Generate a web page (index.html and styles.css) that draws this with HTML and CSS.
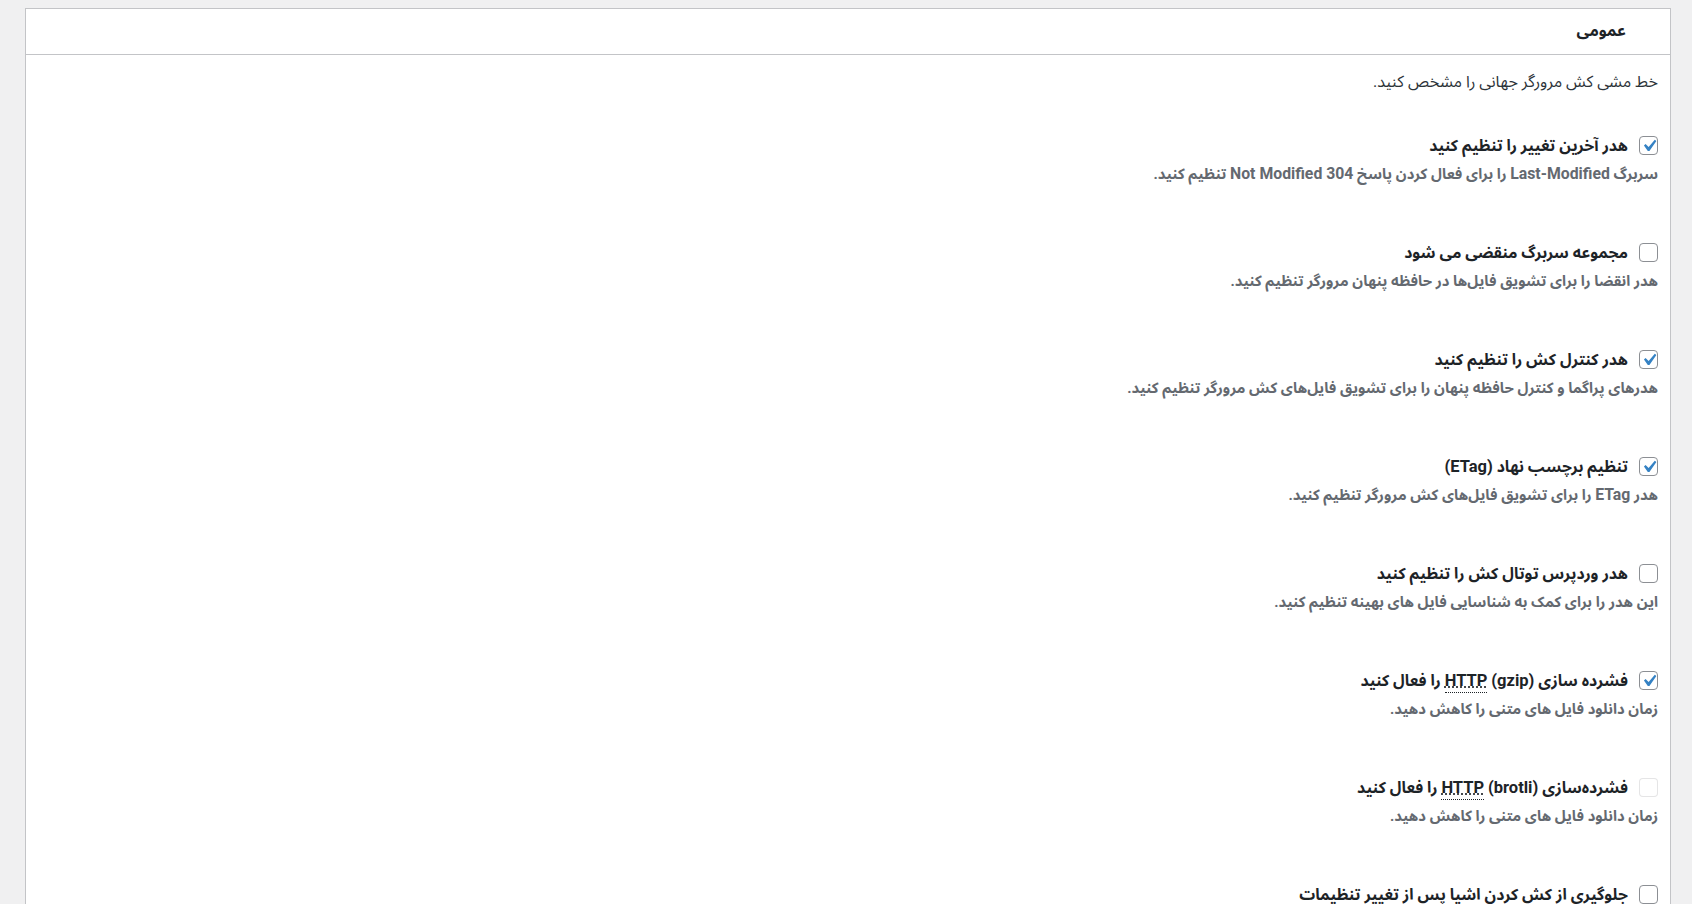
FILE: index.html
```html
<!DOCTYPE html>
<html lang="fa" dir="rtl">
<head>
<meta charset="utf-8">
<title>عمومی</title>
<link rel="stylesheet" href="styles.css">
</head>
<body>
<div class="page">
  <div class="card">
    <div class="card-head"><h2 class="card-title">عمومی</h2></div>
    <div class="card-body">
      <p class="intro">خط مشی کش مرورگر جهانی را مشخص کنید.</p>
      <ul class="opts">
        <li class="opt">
          <label class="opt-title"><span class="cb"><svg class="tick" viewBox="0 0 20 20"><path d="M14.83 4.89l1.34.94-5.81 8.38H9.02L5.78 9.67l1.34-1.25 2.57 2.4z"/></svg></span><span>هدر آخرین تغییر را تنظیم کنید</span></label>
          <p class="opt-desc">سربرگ <span class="lat">Last-Modified</span> را برای فعال کردن پاسخ <span class="lat">304 Not Modified</span> تنظیم کنید.</p>
        </li>
        <li class="opt">
          <label class="opt-title"><span class="cb"></span><span>مجموعه سربرگ منقضی می شود</span></label>
          <p class="opt-desc">هدر انقضا را برای تشویق فایل‌ها در حافظه پنهان مرورگر تنظیم کنید.</p>
        </li>
        <li class="opt">
          <label class="opt-title"><span class="cb"><svg class="tick" viewBox="0 0 20 20"><path d="M14.83 4.89l1.34.94-5.81 8.38H9.02L5.78 9.67l1.34-1.25 2.57 2.4z"/></svg></span><span>هدر کنترل کش را تنظیم کنید</span></label>
          <p class="opt-desc">هدرهای پراگما و کنترل حافظه پنهان را برای تشویق فایل‌های کش مرورگر تنظیم کنید.</p>
        </li>
        <li class="opt">
          <label class="opt-title"><span class="cb"><svg class="tick" viewBox="0 0 20 20"><path d="M14.83 4.89l1.34.94-5.81 8.38H9.02L5.78 9.67l1.34-1.25 2.57 2.4z"/></svg></span><span>تنظیم برچسب نهاد <span class="lat">(ETag)</span></span></label>
          <p class="opt-desc">هدر <span class="lat">ETag</span> را برای تشویق فایل‌های کش مرورگر تنظیم کنید.</p>
        </li>
        <li class="opt">
          <label class="opt-title"><span class="cb"></span><span>هدر وردپرس توتال کش را تنظیم کنید</span></label>
          <p class="opt-desc">این هدر را برای کمک به شناسایی فایل های بهینه تنظیم کنید.</p>
        </li>
        <li class="opt">
          <label class="opt-title"><span class="cb"><svg class="tick" viewBox="0 0 20 20"><path d="M14.83 4.89l1.34.94-5.81 8.38H9.02L5.78 9.67l1.34-1.25 2.57 2.4z"/></svg></span><span>فشرده سازی <abbr class="lat" title="Hypertext Transfer Protocol">HTTP</abbr> <span class="lat">(gzip)</span> را فعال کنید</span></label>
          <p class="opt-desc">زمان دانلود فایل های متنی را کاهش دهید.</p>
        </li>
        <li class="opt">
          <label class="opt-title"><span class="cb disabled"></span><span>فشرده‌سازی <abbr class="lat" title="Hypertext Transfer Protocol">HTTP</abbr> <span class="lat">(brotli)</span> را فعال کنید</span></label>
          <p class="opt-desc">زمان دانلود فایل های متنی را کاهش دهید.</p>
        </li>
        <li class="opt">
          <label class="opt-title"><span class="cb"></span><span>جلوگیری از کش کردن اشیا پس از تغییر تنظیمات</span></label>
          <p class="opt-desc">زمان دانلود فایل های متنی را کاهش دهید.</p>
        </li>
      </ul>
    </div>
  </div>
</div>
</body>
</html>
```

FILE: styles.css
```css
html, body {
  margin: 0;
  padding: 0;
  background: #f0f0f1;
  height: 100%;
  overflow: hidden;
}
body {
  font-family: Roboto, "Noto Sans Arabic", "DejaVu Sans", sans-serif;
  color: #3c434a;
}
.page {
  padding: 8px 21px 0 25px;
}
.card {
  background: #fff;
  border: 1px solid #c3c4c7;
  border-bottom: none;
  min-height: 900px;
}
.card-head {
  height: 45px;
  border-bottom: 1px solid #c3c4c7;
  display: flex;
  align-items: center;
  padding-right: 44px;
}
.card-title {
  margin: 0;
  font-size: 16px;
  font-weight: 700;
  color: #1d2327;
  line-height: 1.4;
}
.card-body {
  padding: 0 12px;
}
.intro {
  margin: 15px 0 0;
  font-size: 16.1px;
  line-height: 24px;
  color: #2c3338;
}
.opts {
  list-style: none;
  margin: 38px 0 0;
  padding: 0;
  display: flex;
  flex-direction: column;
  gap: 52px;
}
.opt {
  display: flex;
  flex-direction: column;
  gap: 2px;
}
.opt-title {
  display: flex;
  align-items: center;
  gap: 11px;
  font-size: 15.8px;
  font-weight: 700;
  line-height: 27px;
  color: #1d2327;
}
.opt-title .lat {
  font-size: 16.5px;
}
.opt-desc {
  margin: 0;
  font-size: 14.8px;
  font-weight: 700;
  line-height: 26px;
  color: #646970;
}
.opt-desc .lat {
  font-size: 15.8px;
}
.cb {
  flex: none;
  width: 17px;
  height: 17px;
  border: 1px solid #8c8f94;
  border-radius: 4px;
  background: #fff;
  position: relative;
  box-sizing: content-box;
}
.tick {
  position: absolute;
  left: -3px;
  top: -3px;
  width: 24px;
  height: 24px;
  fill: #3582c4;
}
.cb.disabled {
  border-color: rgba(220, 220, 222, 0.75);
}
abbr {
  text-decoration: underline dotted;
  padding-bottom: 2px;
  border-bottom: 1px dotted #1d2327;
}
```
